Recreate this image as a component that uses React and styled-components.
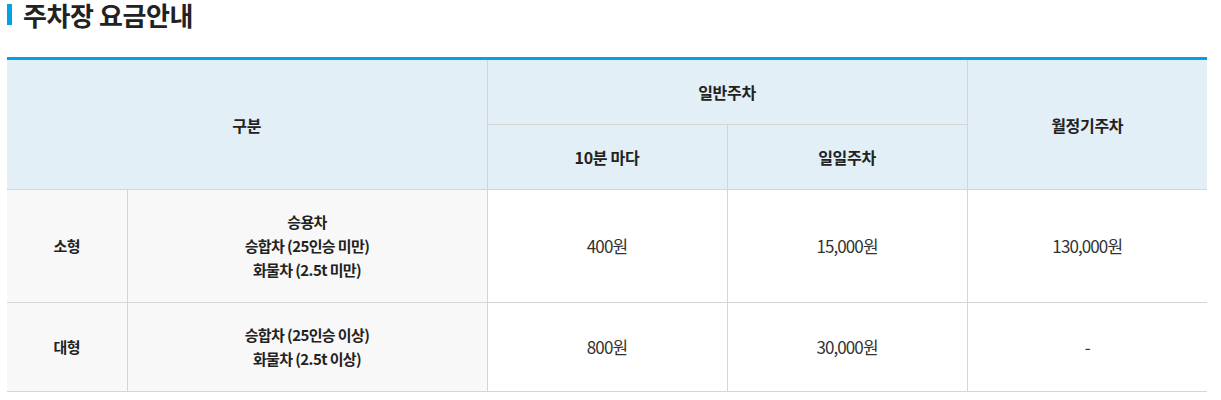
import React from "react";
import styled, { createGlobalStyle } from "styled-components";

const GlobalStyle = createGlobalStyle`
  body {
    margin: 0;
    background: #fff;
    font-family: "Noto Sans CJK KR", "Noto Sans", sans-serif;
  }
`;

const Page = styled.div`
  padding: 0 14px 0 7px;
`;

const Heading = styled.h2`
  display: flex;
  align-items: center;
  gap: 11px;
  margin: 0;
  height: 30px;
  line-height: 30px;
  font-size: 26px;
  font-weight: 700;
  letter-spacing: -0.4px;
  color: #222;
  &::before {
    content: "";
    flex: none;
    width: 5px;
    height: 21px;
    margin-top: -1px;
    background: #00a3e3;
  }
`;

const Table = styled.table`
  width: 1200px;
  margin-top: 27px;
  border-collapse: collapse;
  table-layout: fixed;
  border-top: 3px solid #00a3e3;
  border-bottom: 1px solid #d5d5d5;
`;

const Th = styled.th`
  height: ${(p) => p.$h}px;
  padding: 0;
  background: #e2eff6;
  border: 1px solid #d5d5d5;
  border-top: none;
  font-size: 16px;
  font-weight: 700;
  color: #222;
  letter-spacing: -0.3px;
  text-align: center;
  vertical-align: middle;
  &:first-child { border-left: none; }
  &:last-child { border-right: none; }
`;

const Td = styled.td`
  height: ${(p) => p.$h}px;
  padding: 0;
  background: ${(p) => (p.$label ? "#f8f8f8" : "#fff")};
  border: 1px solid #d5d5d5;
  font-size: ${(p) => (p.$label ? "15px" : "17px")};
  font-weight: ${(p) => (p.$label ? 700 : 400)};
  color: ${(p) => (p.$label ? "#222" : "#333")};
  letter-spacing: ${(p) => (p.$label ? "-0.6px" : "-0.9px")};
  line-height: 24px;
  text-align: center;
  vertical-align: middle;
  &:first-child { border-left: none; }
  &:last-child { border-right: none; }
`;

const rows = [
  {
    size: "소형",
    kinds: ["승용차", "승합차 (25인승 미만)", "화물차 (2.5t 미만)"],
    per10: "400원",
    daily: "15,000원",
    monthly: "130,000원",
    h: 112,
  },
  {
    size: "대형",
    kinds: ["승합차 (25인승 이상)", "화물차 (2.5t 이상)"],
    per10: "800원",
    daily: "30,000원",
    monthly: "-",
    h: 88,
  },
];

export default function App() {
  return (
    <>
      <GlobalStyle />
      <Page>
        <Heading>주차장 요금안내</Heading>
        <Table>
          <colgroup>
            <col style={{ width: "10%" }} />
            <col style={{ width: "30%" }} />
            <col style={{ width: "20%" }} />
            <col style={{ width: "20%" }} />
            <col style={{ width: "20%" }} />
          </colgroup>
          <thead>
            <tr>
              <Th colSpan={2} rowSpan={2} $h={64}>
                구분
              </Th>
              <Th colSpan={2} $h={64}>
                일반주차
              </Th>
              <Th rowSpan={2} $h={64}>
                월정기주차
              </Th>
            </tr>
            <tr>
              <Th $h={64}>10분 마다</Th>
              <Th $h={64}>일일주차</Th>
            </tr>
          </thead>
          <tbody>
            {rows.map((r) => (
              <tr key={r.size}>
                <Td $label $h={r.h}>{r.size}</Td>
                <Td $label $h={r.h}>
                  {r.kinds.map((k) => (
                    <div key={k}>{k}</div>
                  ))}
                </Td>
                <Td $h={r.h}>{r.per10}</Td>
                <Td $h={r.h}>{r.daily}</Td>
                <Td $h={r.h}>{r.monthly}</Td>
              </tr>
            ))}
          </tbody>
        </Table>
      </Page>
    </>
  );
}
